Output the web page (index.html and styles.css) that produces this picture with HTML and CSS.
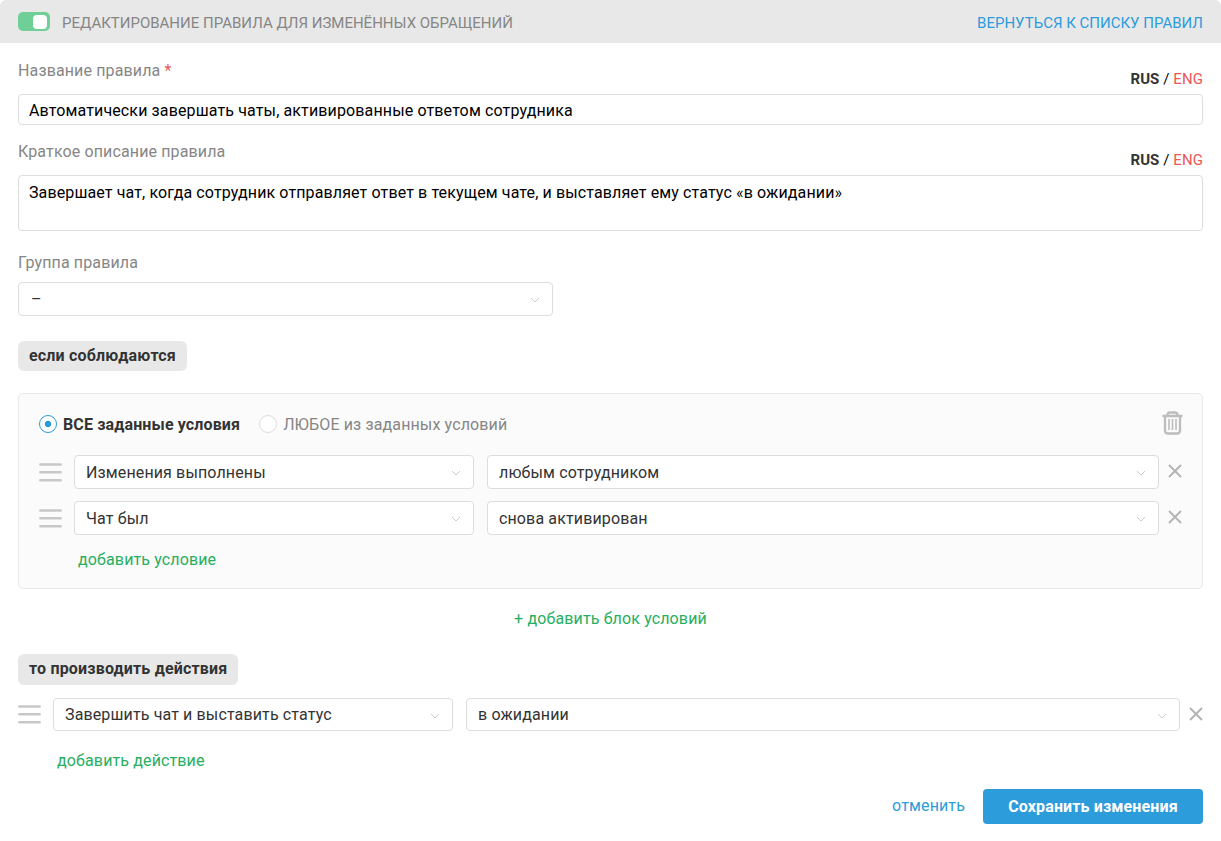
FILE: index.html
```html
<!DOCTYPE html>
<html lang="ru">
<head>
  <meta charset="UTF-8">
  <meta name="viewport" content="width=device-width, initial-scale=1">
  <title>Редактирование правила</title>
  <link rel="stylesheet" href="styles.css">
</head>
<body>
  <!-- shared icons -->
  <svg class="icon-defs" width="0" height="0">
    <symbol id="icon-chevron" viewBox="0 0 10 6"><path d="M1 1l4 4 4-4" fill="none" stroke="currentColor"/></symbol>
    <symbol id="icon-close" viewBox="0 0 14 14"><path d="M1 1l12 12M13 1L1 13" fill="none" stroke="currentColor" stroke-width="1.9"/></symbol>
    <symbol id="icon-drag" viewBox="0 0 23 19"><path d="M1.3 1.5h20.4M1.3 9.3h20.4M1.3 17.2h20.4" fill="none" stroke="currentColor" stroke-width="2.5" stroke-linecap="round"/></symbol>
    <symbol id="icon-trash" viewBox="0 0 21 24">
      <path d="M.5 5h20M5.5 4.5V4Q5.5 1.5 8 1.5h5Q15.5 1.5 15.5 4v.5M3 5v14.5q0 3 3 3h9q3 0 3-3V5" fill="none" stroke="currentColor" stroke-width="2.3"/>
      <path d="M7 8v11M10.5 8v11M14 8v11" fill="none" stroke="currentColor" stroke-width="1.6"/>
    </symbol>
  </svg>

  <header class="page-header">
    <button class="toggle" type="button" aria-label="Включить правило"></button>
    <h1>РЕДАКТИРОВАНИЕ ПРАВИЛА ДЛЯ ИЗМЕНЁННЫХ ОБРАЩЕНИЙ</h1>
    <a class="back-link" href="#">ВЕРНУТЬСЯ К СПИСКУ ПРАВИЛ</a>
  </header>

  <form class="rule-form">
    <div class="field-head">
      <label for="ruleName">Название правила <span class="required">*</span></label>
      <div class="lang"><b>RUS</b> / <a href="#">ENG</a></div>
    </div>
    <input class="control" type="text" id="ruleName" value="Автоматически завершать чаты, активированные ответом сотрудника">

    <div class="field-head field-head-desc">
      <label for="ruleDesc">Краткое описание правила</label>
      <div class="lang"><b>RUS</b> / <a href="#">ENG</a></div>
    </div>
    <textarea class="control" id="ruleDesc">Завершает чат, когда сотрудник отправляет ответ в текущем чате, и выставляет ему статус «в ожидании»</textarea>

    <div class="field-head field-head-group">
      <label>Группа правила</label>
    </div>
    <div class="select select-group"><span>–</span><svg class="chevron"><use href="#icon-chevron"/></svg></div>

    <div class="badge badge-if">если соблюдаются</div>

    <section class="conditions">
      <div class="match-row">
        <span class="radio checked"></span><b class="match-all">ВСЕ заданные условия</b>
        <span class="radio"></span><span class="match-any">ЛЮБОЕ из заданных условий</span>
        <svg class="trash"><use href="#icon-trash"/></svg>
      </div>
      <div class="row">
        <svg class="drag"><use href="#icon-drag"/></svg>
        <div class="select select-name"><span>Изменения выполнены</span><svg class="chevron"><use href="#icon-chevron"/></svg></div>
        <div class="select select-value"><span>любым сотрудником</span><svg class="chevron"><use href="#icon-chevron"/></svg></div>
        <svg class="remove"><use href="#icon-close"/></svg>
      </div>
      <div class="row">
        <svg class="drag"><use href="#icon-drag"/></svg>
        <div class="select select-name"><span>Чат был</span><svg class="chevron"><use href="#icon-chevron"/></svg></div>
        <div class="select select-value"><span>снова активирован</span><svg class="chevron"><use href="#icon-chevron"/></svg></div>
        <svg class="remove"><use href="#icon-close"/></svg>
      </div>
      <a class="add-link" href="#">добавить условие</a>
    </section>

    <a class="add-link add-block" href="#">+ добавить блок условий</a>

    <div class="badge badge-then">то производить действия</div>

    <section class="actions">
      <div class="row">
        <svg class="drag"><use href="#icon-drag"/></svg>
        <div class="select select-name"><span>Завершить чат и выставить статус</span><svg class="chevron"><use href="#icon-chevron"/></svg></div>
        <div class="select select-value"><span>в ожидании</span><svg class="chevron"><use href="#icon-chevron"/></svg></div>
        <svg class="remove"><use href="#icon-close"/></svg>
      </div>
      <a class="add-link" href="#">добавить действие</a>
    </section>

    <footer class="form-footer">
      <a class="cancel" href="#">отменить</a>
      <button class="save-btn" type="submit">Сохранить изменения</button>
    </footer>
  </form>
</body>
</html>
```

FILE: styles.css
```css
* { box-sizing: border-box; }
body { margin: 0; background: #fff; color: #333; font: 16px/20px Roboto, Arial, sans-serif; }
a { text-decoration: none; }
svg { display: block; flex: none; }
.icon-defs { position: absolute; }

.page-header { display: flex; align-items: center; height: 43px; padding: 0 18px; background: #e8e8e8; border-radius: 6px 6px 0 0; }
.page-header h1 { margin: 2px 0 0 12px; font-size: 15px; font-weight: 400; color: #868686; }
.toggle { width: 32px; height: 19px; padding: 3px; border: none; border-radius: 5px; background: #6fcf97; display: flex; justify-content: flex-end; }
.toggle::after { content: ""; width: 14px; height: 14px; border-radius: 4px; background: #fff; }
.back-link { margin: 2px 0 0 auto; font-size: 15px; color: #2d9cdb; }

.rule-form { padding: 0 18px; letter-spacing: 0.13px; }
.field-head { display: flex; justify-content: space-between; align-items: flex-start; height: 51px; padding-top: 18px; color: #868686; }
.field-head-desc { height: 50px; padding-top: 17px; }
.field-head-group { padding-top: 22px; }
.required { color: #eb5757; }
.lang { margin-top: 8px; font-size: 15px; letter-spacing: 0.08px; color: #000; }
.lang b { color: #333; }
.lang a { color: #eb5757; }

.control { display: block; width: 100%; height: 31px; padding: 2px 10px 0; border: 1px solid #ddd; border-radius: 4px; background: #fff; color: #000; font: inherit; letter-spacing: inherit; outline: none; }
textarea.control { height: 56px; padding-top: 7px; letter-spacing: 0.12px; resize: none; overflow: hidden; }

.select { display: flex; align-items: center; justify-content: space-between; height: 34px; padding: 2px 12px 0 11px; border: 1px solid #ddd; border-radius: 4px; background: #fff; }
.select-group { width: 535px; padding-left: 12px; }
.select-group .chevron { margin-top: -1px; }
.select-name { width: 400px; }
.select-value { flex: 1; margin-left: 13px; }
.chevron { width: 10px; height: 6px; color: #ccc; }

.badge { width: max-content; height: 30px; padding: 0 11px; border-radius: 6px; background: #e8e8e8; font-weight: bold; line-height: 29px; letter-spacing: 0.18px; }
.badge-if { margin: 25px 0 22px; }
.badge-then { height: 31px; margin: 26px 0 13px; }

.conditions { height: 196px; padding: 17px 19px 0 20px; border: 1px solid #e8e8e8; border-radius: 5px; background: #fbfbfb; }
.match-row { display: flex; align-items: center; height: 26px; margin-bottom: 18px; }
.radio { width: 18px; height: 18px; margin-bottom: 1px; border: 1px solid #ddd; border-radius: 50%; background: #fff; }
.radio.checked { border-color: #2d9cdb; background: radial-gradient(circle, #2d9cdb 3px, #fff 3.6px); }
.match-all { margin: 1px 19px 0 6px; }
.match-any { margin: 1px 0 0 6px; color: #868686; }
.trash { width: 21px; height: 24px; margin: 0 0 2px auto; color: #bdbdbd; }

.row { display: flex; align-items: center; margin-bottom: 12px; }
.drag { width: 23px; height: 19px; margin-right: 12px; color: #c8c8c8; }
.remove { width: 14px; height: 14px; margin: 0 1px 2px 9px; color: #b3b3b3; }
.add-link { display: block; margin-left: 39px; color: #27ae60; }
.conditions .add-link { margin-top: 15px; }
.add-block { margin: 20px 0 0; text-align: center; }
.add-block + .badge { margin-top: 25px; }

.actions { margin-right: -1px; }
.actions .select { height: 33px; padding-top: 0; }
.actions .chevron { margin-top: 2px; }
.actions .row { margin-bottom: 20px; }

.form-footer { display: flex; align-items: center; justify-content: flex-end; margin-top: 18px; }
.cancel { margin: 0 18px 2px 0; color: #2d9cdb; }
.save-btn { width: 220px; height: 35px; border: none; border-radius: 4px; background: #2d9cdb; color: #fff; font: bold 16px Roboto, Arial, sans-serif; letter-spacing: 0.13px; cursor: pointer; }
```
